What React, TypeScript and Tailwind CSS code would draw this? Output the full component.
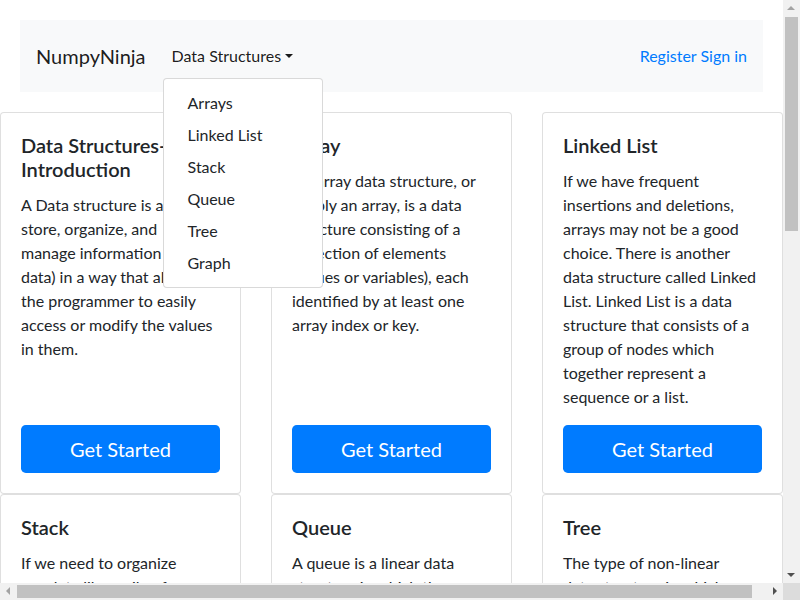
import React from "react";

const cards1 = [
  {
    title: ["Data Structures-", "Introduction"],
    lines: [
      "A Data structure is a way to",
      "store, organize, and",
      "manage information (or",
      "data) in a way that allows",
      "the programmer to easily",
      "access or modify the values",
      "in them.",
    ],
  },
  {
    title: ["Array"],
    lines: [
      "An array data structure, or",
      "simply an array, is a data",
      "structure consisting of a",
      "collection of elements",
      "(values or variables), each",
      "identified by at least one",
      "array index or key.",
    ],
  },
  {
    title: ["Linked List"],
    lines: [
      "If we have frequent",
      "insertions and deletions,",
      "arrays may not be a good",
      "choice. There is another",
      "data structure called Linked",
      "List. Linked List is a data",
      "structure that consists of a",
      "group of nodes which",
      "together represent a",
      "sequence or a list.",
    ],
  },
];

const cards2 = [
  {
    title: ["Stack"],
    lines: [
      "If we need to organize",
      "our data like a pile of",
      "objects, where the last",
      "item added is the first",
      "one removed, we use a",
      "stack.",
    ],
  },
  {
    title: ["Queue"],
    lines: [
      "A queue is a linear data",
      "structure in which the",
      "elements are inserted at",
      "one end and removed from",
      "the other end.",
    ],
  },
  {
    title: ["Tree"],
    lines: [
      "The type of non-linear",
      "data structure in which",
      "data is organized in a",
      "hierarchical manner is",
      "called a tree.",
    ],
  },
];

const cards3 = [
  {
    title: ["Graph"],
    lines: [
      "A graph is a non-linear",
      "data structure consisting",
      "of nodes and edges.",
    ],
  },
];

type CardData = { title: string[]; lines: string[] };

function Card({ c }: { c: CardData }) {
  return (
    <div className="w-[241px] h-[382px] shrink-0 border border-[rgba(0,0,0,0.125)] rounded-[4px] bg-white flex flex-col p-5">
      <h5 className="text-[20px] font-semibold leading-[1.2] mb-3 text-[#212529]">
        {c.title.map((t) => (
          <span key={t} className="block whitespace-nowrap">
            {t}
          </span>
        ))}
      </h5>
      <p className="text-base leading-6 mb-4 text-[#212529]">
        {c.lines.map((l) => (
          <span key={l} className="block whitespace-nowrap">
            {l}
          </span>
        ))}
      </p>
      <button className="mt-auto h-[48px] w-full shrink-0 bg-[#007bff] text-white text-[20px] leading-[1.5] rounded-[4.8px]">
        Get Started
      </button>
    </div>
  );
}

const menu = ["Arrays", "Linked List", "Stack", "Queue", "Tree", "Graph"];

function Scrollbars() {
  return (
    <>
      <div className="fixed right-0 top-0 w-[17px] h-[583px] bg-[#f1f1f1] z-50">
        <div className="absolute left-[4px] top-[6px] w-0 h-0 border-b-[4px] border-b-[#a3a3a3] border-x-[4.5px] border-x-transparent" />
        <div className="absolute left-[2px] top-[17px] w-[13px] h-[214px] bg-[#c1c1c1]" />
        <div className="absolute left-[4px] bottom-[6px] w-0 h-0 border-t-[4px] border-t-[#505050] border-x-[4.5px] border-x-transparent" />
      </div>
      <div className="fixed left-0 bottom-0 w-[783px] h-[17px] bg-[#f1f1f1] z-50">
        <div className="absolute left-[6px] top-[4px] w-0 h-0 border-r-[4px] border-r-[#a3a3a3] border-y-[4.5px] border-y-transparent" />
        <div className="absolute left-[17px] top-[2px] w-[735px] h-[13px] bg-[#c1c1c1]" />
        <div className="absolute right-[6px] top-[4px] w-0 h-0 border-l-[4px] border-l-[#505050] border-y-[4.5px] border-y-transparent" />
      </div>
      <div className="fixed right-0 bottom-0 w-[17px] h-[17px] bg-[#dcdcdc] z-50" />
    </>
  );
}

export default function App() {
  return (
    <div className="w-[802px] min-h-[1735px] bg-white font-['Lato',sans-serif] text-[#212529]">
      <div className="pt-5 pb-5">
        <nav className="ml-5 w-[743px] h-[72px] bg-[#f8f9fa] flex items-center px-4 relative z-10">
          <span className="text-[20px] leading-[30px] mr-[18px] text-[rgba(0,0,0,0.9)]">
            NumpyNinja
          </span>
          <div className="relative">
            <span className="block px-2 py-2 leading-6 text-[rgba(0,0,0,0.9)] whitespace-nowrap">
              Data Structures
              <span className="inline-block align-[0.255em] ml-[0.255em] border-t-[4.8px] border-t-current border-x-[4.8px] border-x-transparent" />
            </span>
            <div className="absolute left-[-1px] top-full mt-[2px] w-[160px] bg-white border border-[rgba(0,0,0,0.15)] rounded-[4px] py-2">
              {menu.map((m) => (
                <div key={m} className="px-6 py-1 leading-6 text-[#212529] whitespace-nowrap">
                  {m}
                </div>
              ))}
            </div>
          </div>
          <div className="ml-auto text-[#007bff] leading-6 whitespace-nowrap">
            <span>Register</span> <span>Sign in</span>
          </div>
        </nav>
      </div>
      <div className="flex flex-col">
        <div className="flex gap-[30px]">
          {cards1.map((c) => (
            <Card key={c.title.join("")} c={c} />
          ))}
        </div>
        <div className="flex gap-[30px]">
          {cards2.map((c) => (
            <Card key={c.title.join("")} c={c} />
          ))}
        </div>
        <div className="flex gap-[30px]">
          {cards3.map((c) => (
            <Card key={c.title.join("")} c={c} />
          ))}
        </div>
      </div>
      <Scrollbars />
    </div>
  );
}
